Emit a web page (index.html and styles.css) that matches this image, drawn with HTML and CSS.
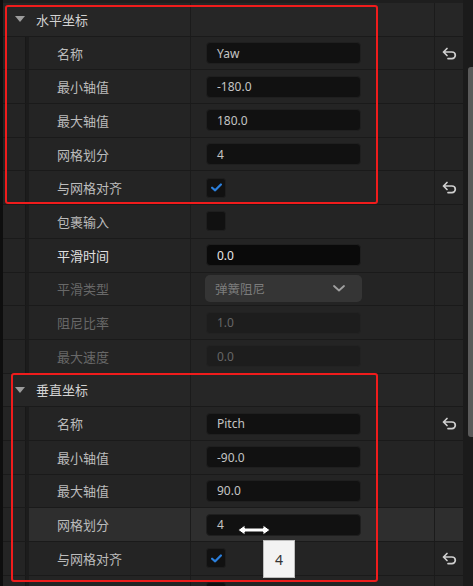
FILE: index.html
```html
<!DOCTYPE html>
<html lang="zh">
<head>
<meta charset="utf-8">
<link rel="stylesheet" href="styles.css">
</head>
<body>
<div class="wrap">
  <div class="panel">
    <div class="topstrip"></div>

    <div class="row header">
      <div class="name"><span class="tri"></span><span class="title">水平坐标</span></div>
      <div class="value"></div>
      <div class="reset"></div>
    </div>
    <div class="row child">
      <div class="name"><span class="label">名称</span></div>
      <div class="value"><div class="input">Yaw</div></div>
      <div class="reset"><svg class="undo" viewBox="0 0 15 13"><path d="M5 1.5 L1.5 5 L5 8.5 M1.5 5 H10 A3.3 3.3 0 0 1 10 11.6 H6"/></svg></div>
    </div>
    <div class="row child">
      <div class="name"><span class="label">最小轴值</span></div>
      <div class="value"><div class="input">-180.0</div></div>
      <div class="reset"></div>
    </div>
    <div class="row child">
      <div class="name"><span class="label">最大轴值</span></div>
      <div class="value"><div class="input">180.0</div></div>
      <div class="reset"></div>
    </div>
    <div class="row child">
      <div class="name"><span class="label">网格划分</span></div>
      <div class="value"><div class="input">4</div></div>
      <div class="reset"></div>
    </div>
    <div class="row child">
      <div class="name"><span class="label">与网格对齐</span></div>
      <div class="value"><div class="check"><svg viewBox="0 0 10 8"><path d="M1 4.2 L3.8 6.6 L9 1.2"/></svg></div></div>
      <div class="reset"><svg class="undo" viewBox="0 0 15 13"><path d="M5 1.5 L1.5 5 L5 8.5 M1.5 5 H10 A3.3 3.3 0 0 1 10 11.6 H6"/></svg></div>
    </div>
    <div class="row child">
      <div class="name"><span class="label">包裹输入</span></div>
      <div class="value"><div class="check"></div></div>
      <div class="reset"></div>
    </div>
    <div class="row child">
      <div class="name"><span class="label bright">平滑时间</span></div>
      <div class="value"><div class="input active">0.0</div></div>
      <div class="reset"></div>
    </div>
    <div class="row child">
      <div class="name"><span class="label dim">平滑类型</span></div>
      <div class="value"><div class="select"><span>弹簧阻尼</span><svg viewBox="0 0 12 7"><path d="M1 1 L6 5.5 L11 1"/></svg></div></div>
      <div class="reset"></div>
    </div>
    <div class="row child">
      <div class="name"><span class="label dim">阻尼比率</span></div>
      <div class="value"><div class="input disabled">1.0</div></div>
      <div class="reset"></div>
    </div>
    <div class="row child">
      <div class="name"><span class="label dim">最大速度</span></div>
      <div class="value"><div class="input disabled">0.0</div></div>
      <div class="reset"></div>
    </div>

    <div class="row header">
      <div class="name"><span class="tri"></span><span class="title">垂直坐标</span></div>
      <div class="value"></div>
      <div class="reset"></div>
    </div>
    <div class="row child">
      <div class="name"><span class="label">名称</span></div>
      <div class="value"><div class="input">Pitch</div></div>
      <div class="reset"><svg class="undo" viewBox="0 0 15 13"><path d="M5 1.5 L1.5 5 L5 8.5 M1.5 5 H10 A3.3 3.3 0 0 1 10 11.6 H6"/></svg></div>
    </div>
    <div class="row child">
      <div class="name"><span class="label">最小轴值</span></div>
      <div class="value"><div class="input">-90.0</div></div>
      <div class="reset"></div>
    </div>
    <div class="row child">
      <div class="name"><span class="label">最大轴值</span></div>
      <div class="value"><div class="input">90.0</div></div>
      <div class="reset"></div>
    </div>
    <div class="row child hover">
      <div class="name"><span class="label">网格划分</span></div>
      <div class="value"><div class="input">4</div></div>
      <div class="reset"></div>
    </div>
    <div class="row child">
      <div class="name"><span class="label">与网格对齐</span></div>
      <div class="value"><div class="check"><svg viewBox="0 0 10 8"><path d="M1 4.2 L3.8 6.6 L9 1.2"/></svg></div></div>
      <div class="reset"><svg class="undo" viewBox="0 0 15 13"><path d="M5 1.5 L1.5 5 L5 8.5 M1.5 5 H10 A3.3 3.3 0 0 1 10 11.6 H6"/></svg></div>
    </div>
    <div class="row child">
      <div class="name"></div>
      <div class="value"><div class="check"></div></div>
      <div class="reset"></div>
    </div>
  </div>
  <div class="scrollbar"><div class="thumb"></div></div>
</div>

<div class="redbox box1"></div>
<div class="redbox box2"></div>

<svg class="cursor" viewBox="0 0 34 12"><path d="M1 6 L8 1 L8 4 L26 4 L26 1 L33 6 L26 11 L26 8 L8 8 L8 11 Z"/></svg>
<div class="tooltip">4</div>
</body>
</html>
```

FILE: styles.css
```css
html, body {
  margin: 0;
  padding: 0;
}
body {
  width: 473px;
  height: 586px;
  overflow: hidden;
  background: #0e0e0e;
  font-family: "Noto Sans", "Noto Sans CJK SC", sans-serif;
  position: relative;
}
.wrap {
  display: flex;
  height: 586px;
  padding-left: 3px;
}
.panel {
  width: 460px;
  display: flex;
  flex-direction: column;
  background: #242424;
}
.topstrip {
  height: 3px;
  flex: none;
  background: #1e1e1e;
}
.row {
  flex: none;
  height: 33.7px;
  box-sizing: border-box;
  border-bottom: 1px solid #1a1a1a;
  display: grid;
  grid-template-columns: 188px 244px 28px;
  background: #242424;
}
.row > div {
  display: flex;
  align-items: center;
}
.row .name, .row .value {
  border-right: 1px solid #1b1b1b;
}
.header {
  background: #262626;
}
.tri {
  width: 0;
  height: 0;
  border-left: 5.5px solid transparent;
  border-right: 5.5px solid transparent;
  border-top: 6px solid #9c9c9c;
  margin-left: 12px;
}
.title {
  margin-left: 11px;
  font-size: 13px;
  color: #d2d2d2;
}
.child .name::before {
  content: "";
  align-self: stretch;
  width: 4px;
  margin-left: 22px;
  background: #1c1c1c;
  border-left: 1px solid #181818;
  box-sizing: border-box;
}
.label {
  margin-left: 28px;
  font-size: 13px;
  color: #bcbcbc;
}
.label.bright {
  color: #e0e0e0;
}
.label.dim {
  color: #686868;
}
.hover {
  background: linear-gradient(to right, #242424 26px, #2e2e2e 26px);
}
.value {
  padding-left: 15px;
}
.input {
  width: 155px;
  height: 22px;
  box-sizing: border-box;
  background: #111;
  border: 1px solid #1f1f1f;
  border-radius: 4px;
  font-size: 12px;
  color: #c4c4c4;
  padding-left: 10px;
  display: flex;
  align-items: center;
}
.input.active {
  background: #0a0a0a;
  color: #e6e6e6;
}
.input.disabled {
  background: #1d1d1d;
  border-color: #222;
  color: #666;
}
.check {
  width: 20px;
  height: 20px;
  box-sizing: border-box;
  background: #111;
  border: 1px solid #1e1e1e;
  border-radius: 3px;
  display: flex;
  align-items: center;
  justify-content: center;
}
.check svg {
  width: 11px;
  height: 9px;
}
.check path {
  fill: none;
  stroke: #2b7fdc;
  stroke-width: 2;
  stroke-linecap: round;
  stroke-linejoin: round;
}
.select {
  width: 157px;
  height: 27px;
  margin-left: -1px;
  box-sizing: border-box;
  background: #353535;
  border-radius: 5px;
  display: flex;
  align-items: center;
  justify-content: space-between;
  padding: 0 17px 0 10px;
  font-size: 12.5px;
  color: #7c7c7c;
}
.select svg {
  width: 12px;
  height: 7px;
}
.select path {
  fill: none;
  stroke: #a0a0a0;
  stroke-width: 1.8;
  stroke-linecap: round;
  stroke-linejoin: round;
}
.reset {
  justify-content: center;
}
.undo {
  width: 15px;
  height: 13px;
}
.undo path {
  fill: none;
  stroke: #cfcfcf;
  stroke-width: 1.7;
  stroke-linecap: round;
  stroke-linejoin: round;
}
.scrollbar {
  width: 10px;
  background: #1b1b1b;
  position: relative;
}
.thumb {
  margin-left: 5px;
  margin-top: 67px;
  width: 5px;
  height: 370px;
  background: #5a5a5a;
  border-radius: 3px 0 0 3px;
}
.redbox {
  position: absolute;
  box-sizing: border-box;
  border: 2px solid #f01c1c;
  border-radius: 3px;
  pointer-events: none;
}
.box1 {
  left: 5px;
  top: 5px;
  width: 373px;
  height: 199px;
}
.box2 {
  left: 11px;
  top: 373px;
  width: 367px;
  height: 209px;
}
.cursor {
  position: absolute;
  left: 237px;
  top: 524px;
  width: 34px;
  height: 12px;
}
.cursor path {
  fill: #fff;
  stroke: #111;
  stroke-width: 1;
  stroke-linejoin: miter;
}
.tooltip {
  position: absolute;
  left: 263px;
  top: 540px;
  width: 32px;
  height: 38px;
  box-sizing: border-box;
  background: #f3f3f3;
  border: 1px solid #bdbdbd;
  display: flex;
  align-items: center;
  justify-content: center;
  font-size: 14px;
  color: #333;
}
```
